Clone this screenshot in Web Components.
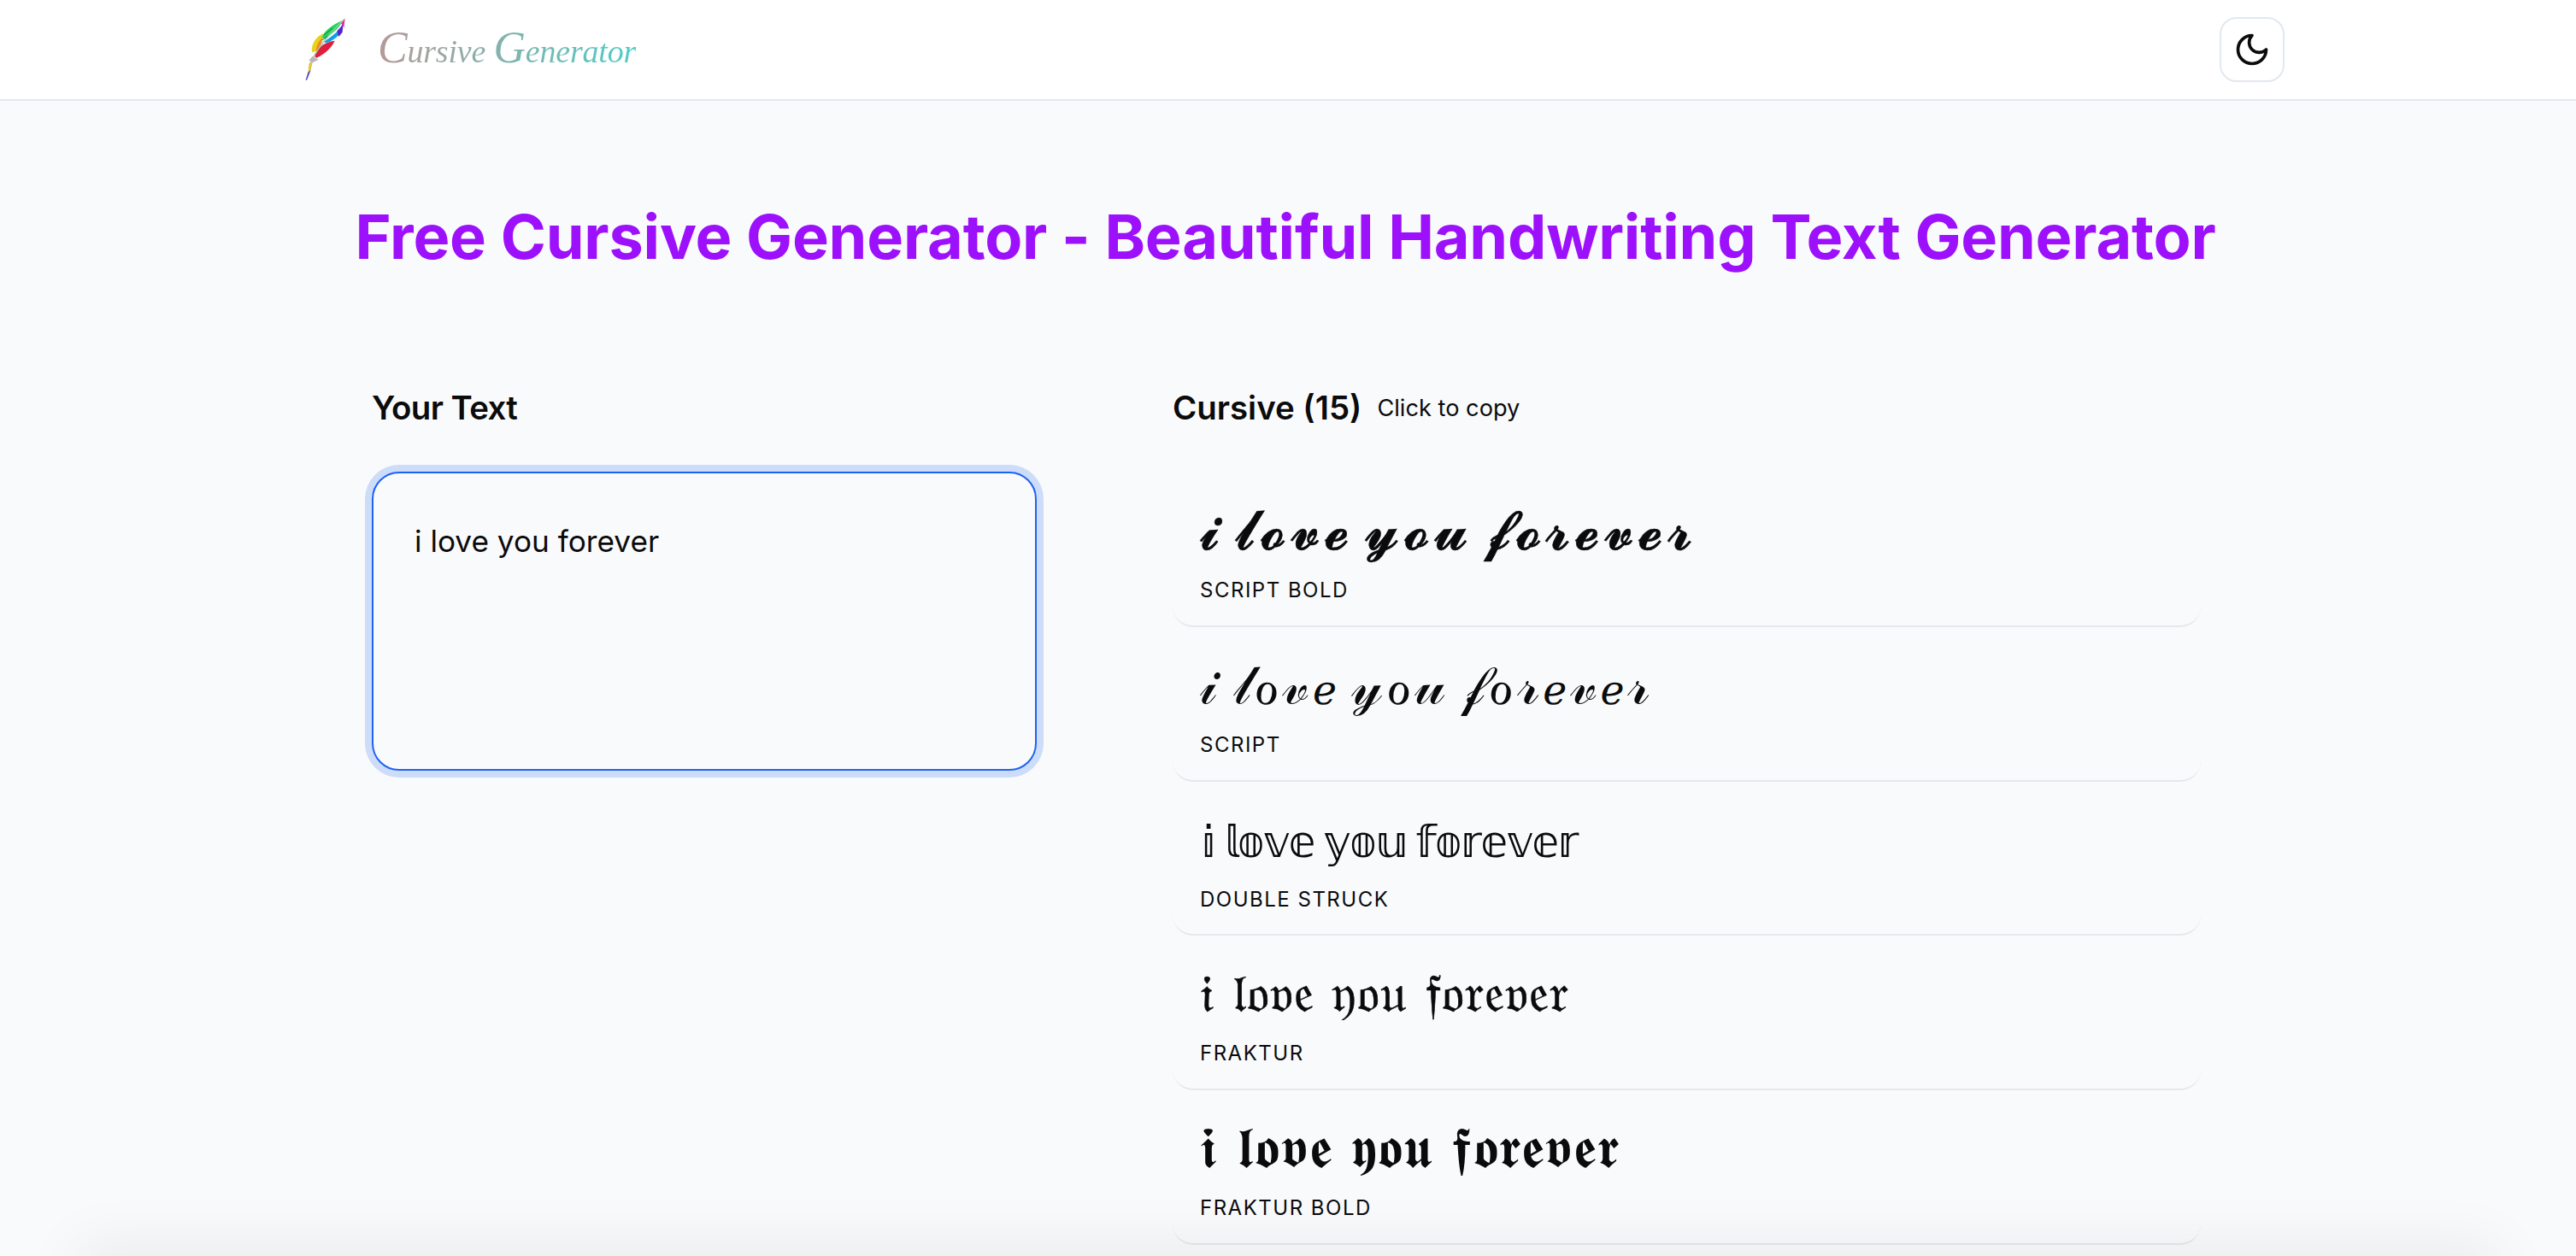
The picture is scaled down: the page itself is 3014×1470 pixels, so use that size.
<!DOCTYPE html>
<html lang="en">
<head>
<meta charset="utf-8">
<title>Free Cursive Generator</title>
<style>
  html, body { margin: 0; height: 100%; overflow: hidden; background: #f9fafc; }
  body { font-family: Inter, "Noto Sans", sans-serif; color: #0b0b0c; }
  /* the script e comes from a bigger fallback face than its neighbours */
  font-row .small-e { font-size: 0.74em; }
</style>
</head>
<body>
<site-header></site-header>
<main-title>Free Cursive Generator - Beautiful Handwriting Text Generator</main-title>
<generator-panel>
  <text-input slot="input">i love you forever</text-input>
  <font-row label="Script Bold" style="--size:65px;--track:4.8px;--word:-12px;--stroke:0.5px">𝓲 𝓵𝓸𝓿𝓮 𝔂𝓸𝓾 𝓯𝓸𝓻𝓮𝓿𝓮𝓻</font-row>
  <font-row label="Script" style="--size:64px;--track:3.6px;--word:-10px;--family:'DejaVu Serif'">𝒾 𝓁ℴ𝓋<span class="small-e">ℯ</span> 𝓎ℴ𝓊 𝒻ℴ𝓇<span class="small-e">ℯ</span>𝓋<span class="small-e">ℯ</span>𝓇</font-row>
  <font-row label="Double Struck" style="--size:52px;--track:-1.8px;--word:-4px;--lh:84px">𝕚 𝕝𝕠𝕧𝕖 𝕪𝕠𝕦 𝕗𝕠𝕣𝕖𝕧𝕖𝕣</font-row>
  <font-row label="Fraktur" style="--size:62px;--track:1px;--stroke:0.6px">𝔦 𝔩𝔬𝔳𝔢 𝔶𝔬𝔲 𝔣𝔬𝔯𝔢𝔳𝔢𝔯</font-row>
  <font-row label="Fraktur Bold" style="--size:66px;--track:0.8px">𝖎 𝖑𝖔𝖛𝖊 𝖞𝖔𝖚 𝖋𝖔𝖗𝖊𝖛𝖊𝖗</font-row>
</generator-panel>
<bottom-shade></bottom-shade>

<script>
class SiteHeader extends HTMLElement {
    connectedCallback() {
        this.attachShadow({ mode: 'open' });
        this.shadowRoot.innerHTML = `
            <style>
                :host {
                    display: flex;
                    align-items: center;
                    justify-content: space-between;
                    box-sizing: border-box;
                    height: 118px;
                    padding: 0 341px 0 355px;
                    background: #fff;
                    border-bottom: 2px solid #e2e8f0;
                }
                .brand { display: flex; align-items: center; gap: 37px; }
                .brand svg { display: block; width: 50px; height: 75px; margin-top: -1px; }
                .name {
                    font-family: "Liberation Serif", serif;
                    font-style: italic;
                    font-size: 38px;
                    line-height: 60px;
                    letter-spacing: -0.2px;
                    background: linear-gradient(90deg, #b49a98, #4ecdc4);
                    -webkit-background-clip: text;
                    background-clip: text;
                    color: transparent;
                }
                .name b { font-weight: 400; font-size: 52px; }
            </style>
            <div class="brand">
                <svg viewBox="160 55 150 225" aria-hidden="true">
                    <path fill="#e9d21c" d="M190 178C186 150 204 124 230 112L224 142 206 176Z"/>
                    <path fill="#f08a1c" d="M204 172C206 152 216 136 228 126L224 146 210 172Z"/>
                    <path fill="#dd1f3c" d="M200 194C204 166 232 142 270 138 260 162 236 184 206 198Z"/>
                    <path fill="#21d95a" d="M224 126C236 100 266 80 296 68 292 90 262 112 236 132Z"/>
                    <path fill="#0d9fe6" d="M232 142C254 126 284 106 298 82 296 110 276 134 240 146Z"/>
                    <path fill="#5a22cf" d="M278 104C288 94 296 84 300 76L297 108 284 124Z"/>
                    <path fill="#e32b9b" d="M292 76L306 60 302 92Z"/>
                    <path fill="none" stroke="#127a3a" stroke-width="3" d="M232 118L262 94M226 136L246 120"/>
                    <path fill="none" stroke="#a9c2b0" stroke-width="4" d="M182 224C194 194 226 138 304 62"/>
                    <path fill="#b9b3c4" d="M180 206L192 192 204 200 214 204 198 212 190 216Z"/>
                    <path fill="#e5c43a" d="M180 216L192 214 186 240 176 252Z"/>
                    <path fill="#3d3bc2" d="M176 250L186 240 172 276 168 276Z"/>
                </svg>
                <span class="name"><b>C</b>ursive <b>G</b>enerator</span>
            </div>
            <theme-button></theme-button>
        `;
    }
}

class ThemeButton extends HTMLElement {
    connectedCallback() {
        this.attachShadow({ mode: 'open' });
        this.shadowRoot.innerHTML = `
            <style>
                :host {
                    display: flex;
                    align-items: center;
                    justify-content: center;
                    box-sizing: border-box;
                    width: 76px;
                    height: 76px;
                    background: #fff;
                    border: 2px solid #e2e8f0;
                    border-radius: 20px;
                    color: #0b0b0c;
                }
            </style>
            <svg width="44" height="44" viewBox="0 0 24 24" fill="none" stroke="currentColor" stroke-width="2" stroke-linecap="round" stroke-linejoin="round">
                <path d="M12 3a6 6 0 0 0 9 9 9 9 0 1 1-9-9Z"/>
            </svg>
        `;
    }
}

class MainTitle extends HTMLElement {
    connectedCallback() {
        this.attachShadow({ mode: 'open' });
        this.shadowRoot.innerHTML = `
            <style>
                :host { display: block; padding-top: 119px; text-align: center; }
                h1 {
                    margin: 0 6px 0 0;
                    font: 700 72px/80px Inter, "Noto Sans", sans-serif;
                    letter-spacing: -0.2px;
                    color: #9d10fb;
                }
            </style>
            <h1><slot></slot></h1>
        `;
    }
}

class GeneratorPanel extends HTMLElement {
    connectedCallback() {
        this.attachShadow({ mode: 'open' });
        this.shadowRoot.innerHTML = `
            <style>
                :host {
                    display: grid;
                    grid-template-columns: 778px 1203px;
                    column-gap: 159px;
                    padding: 130px 0 0 435px;
                }
                .head {
                    display: flex;
                    align-items: center;
                    gap: 18px;
                    height: 60px;
                    font-size: 38.4px;
                    font-weight: 600;
                }
                .head small { font-size: 27.2px; font-weight: 400; }
                .left .head { margin-bottom: 45px; letter-spacing: -0.6px; }
                .right .head { margin-bottom: 46px; }
            </style>
            <section class="left">
                <div class="head">Your Text</div>
                <slot name="input"></slot>
            </section>
            <section class="right">
                <div class="head">Cursive (15) <small>Click to copy</small></div>
                <slot></slot>
            </section>
        `;
    }
}

class TextInput extends HTMLElement {
    connectedCallback() {
        this.attachShadow({ mode: 'open' });
        this.shadowRoot.innerHTML = `
            <style>
                :host {
                    display: block;
                    box-sizing: border-box;
                    height: 350px;
                    padding: 48px;
                    font-size: 35.2px;
                    line-height: 62px;
                    background: #f9fafc;
                    border: 2px solid #1d63f2;
                    border-radius: 32px;
                    box-shadow: 0 0 0 8px rgba(29, 99, 242, 0.2);
                }
            </style>
            <slot></slot>
        `;
    }
}

class FontRow extends HTMLElement {
    connectedCallback() {
        const label = this.getAttribute('label') || '';
        this.attachShadow({ mode: 'open' });
        this.shadowRoot.innerHTML = `
            <style>
                :host {
                    display: block;
                    box-sizing: border-box;
                    height: 180.75px;
                    padding: 28px 32px 0;
                    border-bottom: 2px solid #e6e8eb;
                    border-radius: 24px;
                }
                .text {
                    font-family: var(--family, "DejaVu Sans"), "DejaVu Sans", "Noto Sans", serif;
                    font-size: var(--size, 60px);
                    letter-spacing: var(--track, 0);
                    word-spacing: var(--word, 0);
                    -webkit-text-stroke: var(--stroke, 0) currentColor;
                    height: 80px;
                    line-height: var(--lh, 80px);
                    white-space: nowrap;
                }
                .label {
                    margin-top: 14px;
                    font-size: 24px;
                    line-height: 32px;
                    font-weight: 400;
                    letter-spacing: 1.5px;
                    text-transform: uppercase;
                }
            </style>
            <div class="text"><slot></slot></div>
            <div class="label">${label}</div>
        `;
    }
}

class BottomShade extends HTMLElement {
    connectedCallback() {
        this.attachShadow({ mode: 'open' });
        this.shadowRoot.innerHTML = `
            <style>
                :host {
                    position: fixed;
                    left: 100px;
                    right: 100px;
                    bottom: -40px;
                    height: 40px;
                    box-shadow: 0 0 70px 8px rgba(0, 0, 0, 0.08);
                    pointer-events: none;
                }
            </style>
        `;
    }
}

customElements.define('theme-button', ThemeButton);
customElements.define('site-header', SiteHeader);
customElements.define('main-title', MainTitle);
customElements.define('generator-panel', GeneratorPanel);
customElements.define('text-input', TextInput);
customElements.define('font-row', FontRow);
customElements.define('bottom-shade', BottomShade);
</script>
</body>
</html>
